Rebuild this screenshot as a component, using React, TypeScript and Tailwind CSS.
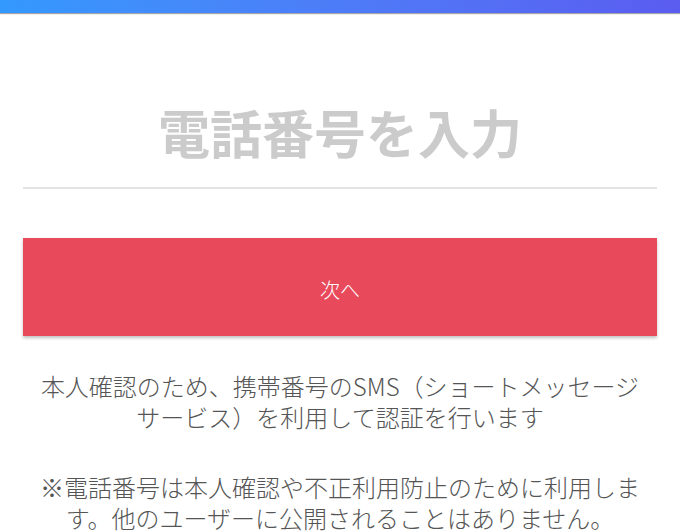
export default function App() {
  return (
    <div
      className="w-[680px] h-[532px] overflow-hidden bg-white"
      style={{ fontFamily: '"Noto Sans CJK JP", "Noto Sans", sans-serif' }}
    >
      <div className="h-[13px] bg-gradient-to-r from-[#3399fe] to-[#5a5cf0] shadow-[0_1px_1px_rgba(0,0,0,0.35)]" />

      <div className="px-[23px]">
        <div className="mt-[80px] pb-[16px] border-b-2 border-[#e3e3e3] text-center">
          <span className="text-[52px] leading-[78px] font-bold text-[#cbcbcb]">
            電話番号を入力
          </span>
        </div>

        <button className="mt-[49px] w-full h-[98px] pt-[5px] bg-[#e84a5b] text-white text-[20px] font-light shadow-[0_2px_3px_rgba(0,0,0,0.25)]">
          次へ
        </button>
      </div>

      <div className="px-[35px] text-center text-[24px] leading-[31px] font-light text-[#555555]">
        <p className="mt-[34px]">
          本人確認のため、携帯番号のSMS（ショートメッセージサービス）を利用して認証を行います
        </p>
        <p className="mt-[39px]">
          ※電話番号は本人確認や不正利用防止のために利用します。他のユーザーに公開されることはありません。
        </p>
      </div>
    </div>
  );
}
